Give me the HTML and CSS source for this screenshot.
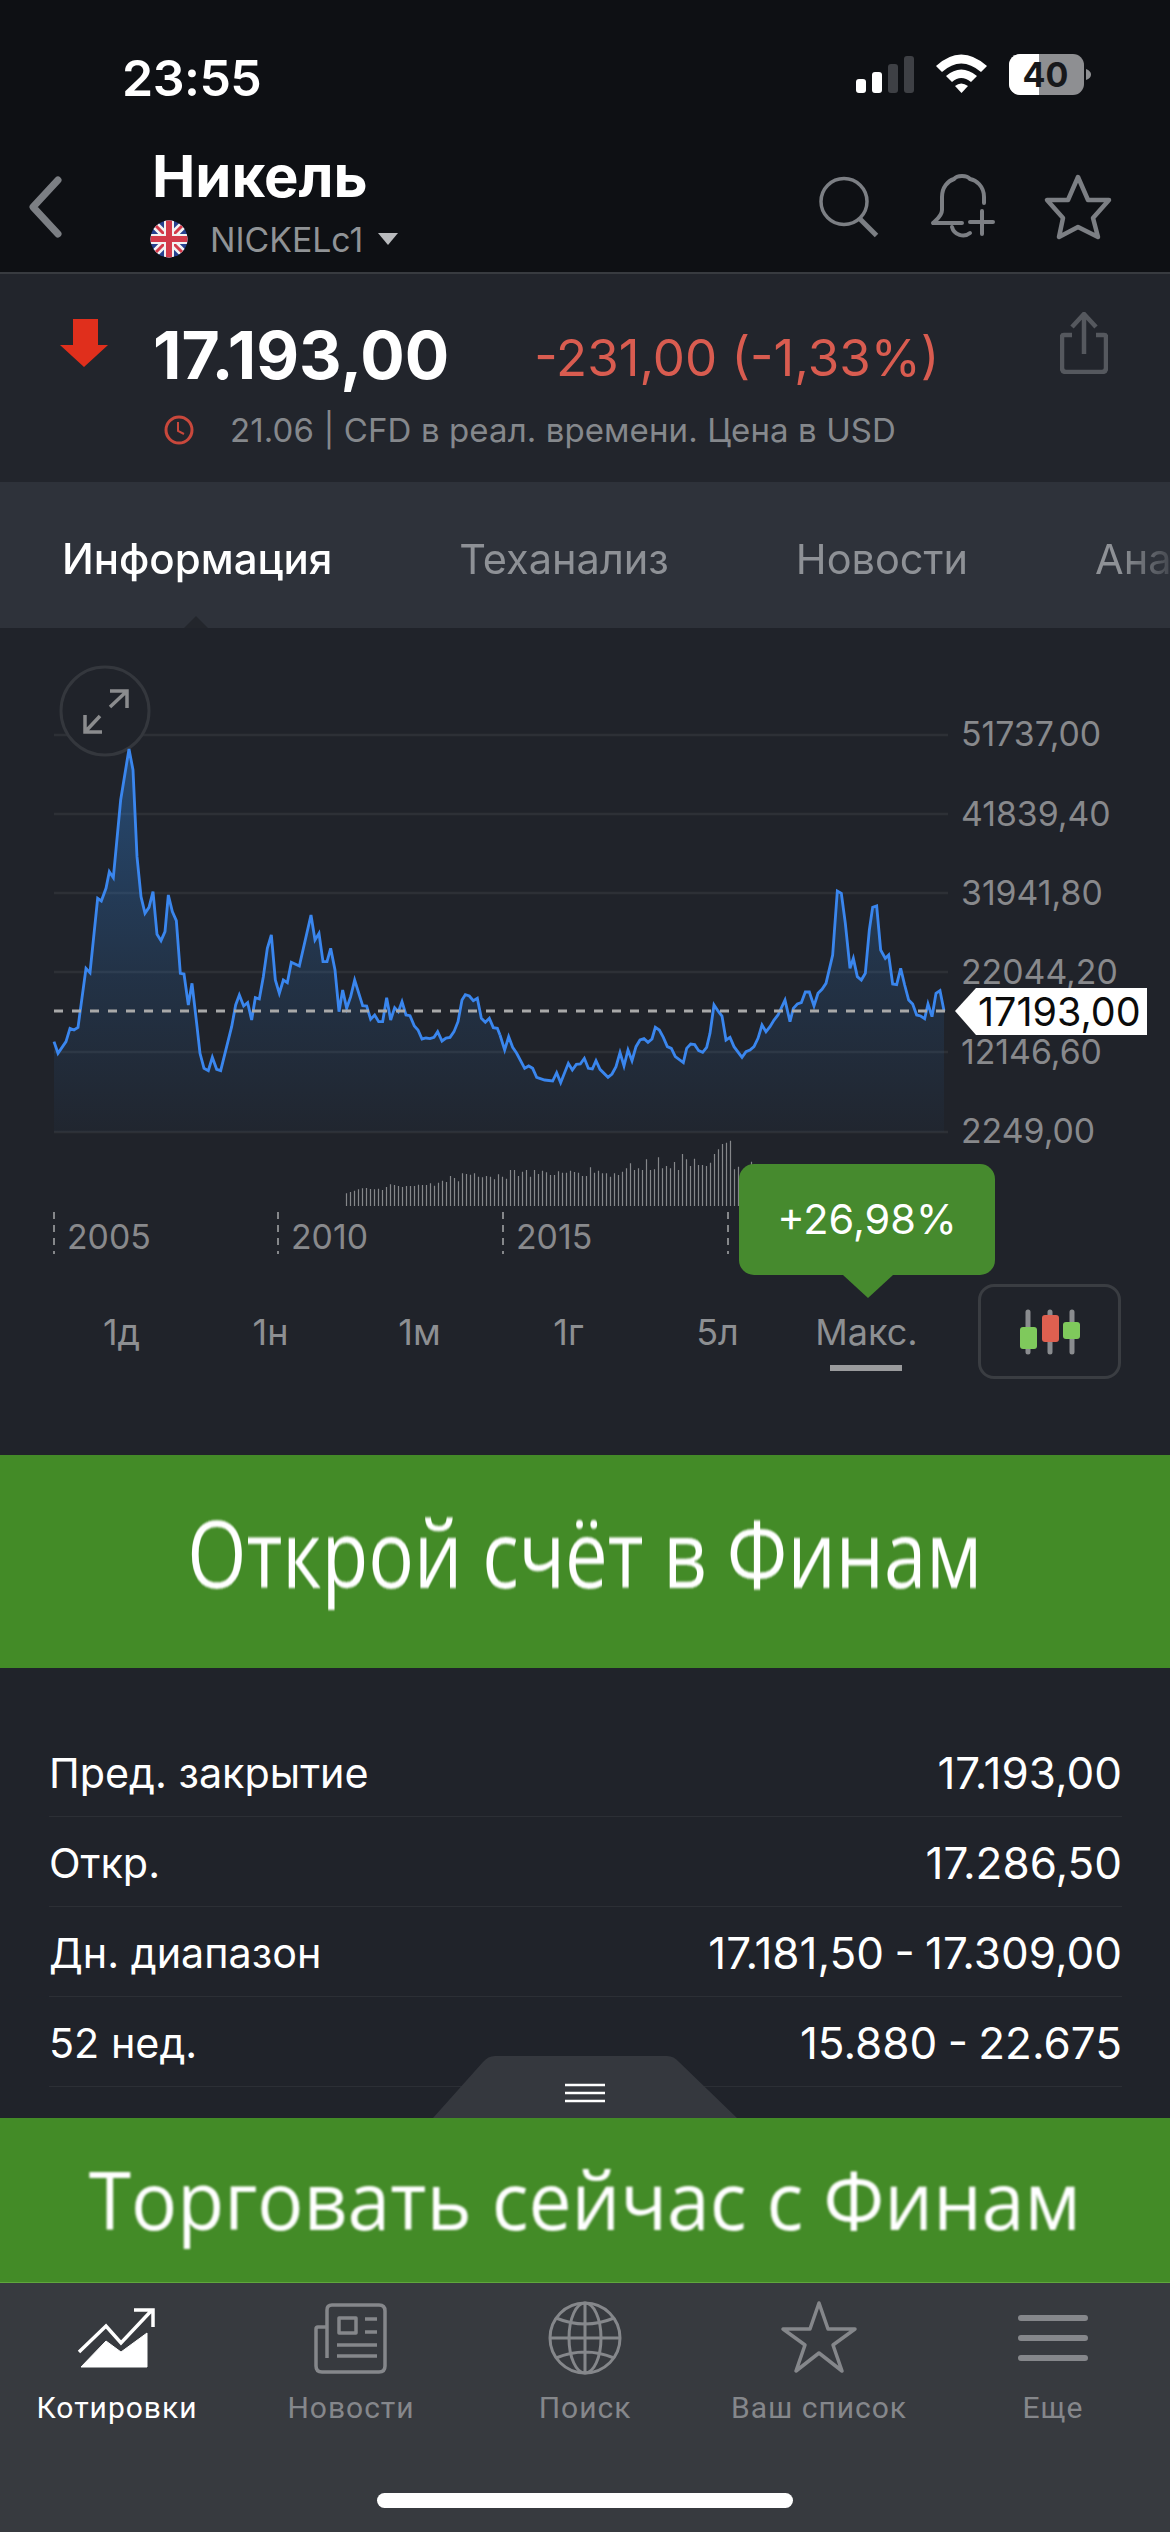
FILE: index.html
```html
<!DOCTYPE html>
<html lang="ru">
<head>
<meta charset="utf-8">
<title>Никель</title>
<link rel="stylesheet" href="styles.css">
</head>
<body>
<div class="page">
  <header class="head">
    <div class="status">
      <span class="time">23:55</span>
      <svg class="status-icons" viewBox="850 52 245 50" width="245" height="50">
        <rect x="856" y="82" width="10" height="14" rx="3" fill="#fff"/>
        <rect x="872" y="75" width="10" height="21" rx="3" fill="#fff"/>
        <rect x="888" y="67" width="10" height="29" rx="3" fill="#3e4045"/>
        <rect x="904" y="59" width="10" height="37" rx="3" fill="#3e4045"/>
        <path d="M936 69Q961 46 987 69L981 75Q961 58 942 75Z" fill="#fff"/>
        <path d="M946 79Q961 66 977 79L971 85Q961 77 952 85Z" fill="#fff"/>
        <path d="M955 89Q961 84 968 89L961.500 96Z" fill="#fff"/>
        <rect x="1009" y="57" width="75" height="41" rx="11" fill="#8e8f92"/>
        <path d="M1020 57H1039V98H1020A11 11 0 0 1 1009 87V68A11 11 0 0 1 1020 57Z" fill="#fff"/>
        <path d="M1086 72Q1091 74 1091 77.500Q1091 81 1086 83Z" fill="#8e8f92"/>
        <text class="batt" x="1045.500" y="90" text-anchor="middle">40</text>
      </svg>
    </div>
    <div class="topbar">
      <svg class="back" viewBox="24 170 40 72" width="40" height="72"><path d="M58 180L33 207L58 234" fill="none" stroke="#7c7f84" stroke-width="7" stroke-linecap="round" stroke-linejoin="round"/></svg>
      <div class="title-block">
        <div class="title">Никель</div>
        <div class="sub">
          <svg class="flag" viewBox="0 0 38 38" width="38" height="38">
            <defs><clipPath id="fc"><circle cx="19" cy="19" r="18.500"/></clipPath></defs>
            <g clip-path="url(#fc)">
              <rect width="38" height="38" fill="#27408f"/>
              <path d="M0 0L38 38M38 0L0 38" stroke="#f2f2f2" stroke-width="8"/>
              <path d="M0 0L38 38M38 0L0 38" stroke="#d33a4a" stroke-width="3"/>
              <path d="M19 0V38M0 19H38" stroke="#f2f2f2" stroke-width="10"/>
              <path d="M19 0V38M0 19H38" stroke="#d33a4a" stroke-width="6"/>
            </g>
          </svg>
          <span class="symbol">NICKELc1</span>
          <svg class="caret" viewBox="0 0 20 12" width="20" height="12"><path d="M0 0H20L10 12Z" fill="#b9bbbe"/></svg>
        </div>
      </div>
      <div class="top-actions">
        <svg viewBox="815 170 70 72" width="70" height="72"><circle cx="844" cy="201.500" r="23" fill="none" stroke="#7c7f84" stroke-width="3.500"/><path d="M860 219L876.500 235.500" stroke="#7c7f84" stroke-width="5" fill="none"/></svg>
        <svg viewBox="925 170 75 72" width="75" height="72"><g fill="none" stroke="#7c7f84" stroke-width="4" stroke-linecap="round" stroke-linejoin="round"><path d="M984 203V197C984 186 976 180 970 179C967 175 957 175 954 179C948 181 942 187 942 197V210C942 216 937 219 933 223H962"/><path d="M952 227C954 235 964 238 970 233"/><path d="M970 222H993M982 211V234"/></g></svg>
        <svg viewBox="1040 170 75 72" width="75" height="72"><path d="M1078 177L1088 200H1109L1093 218L1098 237L1078 227L1059 237L1063 218L1047 200H1068Z" fill="none" stroke="#7c7f84" stroke-width="4.500" stroke-linejoin="round"/></svg>
      </div>
    </div>
  </header>

  <section class="quote">
    <div class="quote-main">
      <svg class="down" viewBox="0 0 48 48" width="48" height="48"><path d="M13 0H38V26H48L24 48L0 26H13Z" fill="#e02f1c"/></svg>
      <span class="price">17.193,00</span>
      <span class="change">-231,00 (-1,33%)</span>
      <svg class="share" viewBox="0 0 48 62" width="48" height="62"><g fill="none" stroke="#55585e" stroke-width="4.500"><path d="M24 42V3M12 15L24 2L36 15"/><path d="M12 23H4Q2 23 2 25V56Q2 60 6 60H42Q46 60 46 56V25Q46 23 44 23H36"/></g></svg>
    </div>
    <div class="quote-meta">
      <svg class="clock" viewBox="0 0 30 30" width="30" height="30"><circle cx="15" cy="15" r="13" fill="none" stroke="#c9483c" stroke-width="3"/><path d="M14 7V16L20 19" fill="none" stroke="#c9483c" stroke-width="2"/></svg>
      <span>21.06 | CFD в реал. времени. Цена в USD</span>
    </div>
  </section>

  <nav class="tabs">
    <div class="tab-row">
      <span class="tab tab-on">Информация</span>
      <span class="tab">Теханализ</span>
      <span class="tab">Новости</span>
      <span class="tab">Аналитика</span>
    </div>
    <span class="tab-pointer"></span>
  </nav>

  <section class="chart">
    <svg class="plot" viewBox="0 628 1170 642" width="1170" height="642">
      <defs>
        <linearGradient id="area" gradientUnits="userSpaceOnUse" x1="0" y1="150" x2="0" y2="1295">
          <stop offset="0" stop-color="#2f80d8" stop-opacity=".42"/>
          <stop offset=".6" stop-color="#2f80d8" stop-opacity=".16"/>
          <stop offset="1" stop-color="#2f80d8" stop-opacity=".03"/>
        </linearGradient>
      </defs>
      <g class="grid">
        <path d="M54 735H948M54 814H948M54 893H948M54 972H948M54 1052H948M54 1132H948"/>
      </g>
      <circle cx="105" cy="711" r="44" class="expand-ring"/>
      <path class="expand-arrows" d="M85 715V732H102M85 732L100 716M110 691H127V708M127 691L110 707"/>

      <g transform="translate(0 700) scale(.33333)">
        <polygon fill="url(#area)" points="162,1295 162,1025 174,1060 198,1025 210,985 222,990 234,982 258,805 270,818 293,595 304,603 318,565 328,515 340,533 362,300 387,155 399,210 411,470 423,590 435,640 447,622 459,575 471,703 483,722 495,695 505,585 517,635 529,662 541,820 552,822 565,915 576,850 590,970 600,1060 612,1105 625,1112 637,1072 650,1108 662,1112 680,1040 695,980 707,915 718,885 731,918 743,908 755,960 766,893 778,897 790,830 802,745 814,705 826,840 838,880 850,840 862,848 874,787 898,798 933,645 945,720 957,700 969,785 981,785 992,745 1005,810 1017,935 1028,870 1040,925 1052,890 1064,840 1088,917 1100,918 1112,958 1124,945 1136,965 1148,965 1160,893 1172,960 1184,923 1195,935 1206,905 1218,945 1230,947 1243,978 1254,990 1266,1017 1278,1014 1290,1016 1302,1012 1313,995 1326,1023 1338,1014 1350,1012 1362,995 1374,965 1386,900 1396,884 1408,888 1420,902 1432,895 1444,955 1456,967 1468,955 1480,983 1492,985 1500,1005 1500,1295"/>
        <polyline class="curve" points="162,1025 174,1060 198,1025 210,985 222,990 234,982 258,805 270,818 293,595 304,603 318,565 328,515 340,533 362,300 387,147 399,210 411,470 423,590 435,640 447,622 459,575 471,703 483,722 495,695 505,585 517,635 529,662 541,820 552,822 565,915 576,850 590,970 600,1060 612,1105 625,1112 637,1072 650,1108 662,1112 680,1040 695,980 707,915 718,885 731,918 743,908 755,960 766,893 778,897 790,830 802,745 814,705 826,840 838,880 850,840 862,848 874,787 898,798 933,645 945,720 957,700 969,785 981,785 992,745 1005,810 1017,935 1028,870 1040,925 1052,890 1064,840 1088,917 1100,918 1112,958 1124,945 1136,965 1148,965 1160,893 1172,960 1184,923 1195,935 1206,905 1218,945 1230,947 1243,978 1254,990 1266,1017 1278,1014 1290,1016 1302,1012 1313,995 1326,1023 1338,1014 1350,1012 1362,995 1374,965 1386,900 1396,884 1408,888 1420,902 1432,895 1444,955 1456,967 1468,955 1480,983 1492,985 1500,1005"/>
      </g>
      <g transform="translate(500 700) scale(.33333)">
        <polygon fill="url(#area)" points="0,1295 0,1005 14,1050 26,1010 38,1042 50,1060 74,1105 86,1098 98,1105 110,1132 134,1140 158,1143 170,1118 182,1148 205,1090 217,1110 229,1093 241,1092 253,1075 265,1105 277,1107 288,1082 300,1108 324,1132 336,1122 348,1100 360,1058 372,1098 384,1050 396,1082 408,1040 420,1020 432,1016 444,1027 456,1017 466,982 478,990 490,1012 502,1040 514,1045 526,1070 550,1088 560,1045 572,1032 584,1034 596,1052 608,1057 620,1042 630,1000 642,915 654,933 666,948 678,1020 690,1012 702,1040 726,1072 738,1055 750,1050 762,1040 774,1015 786,975 798,995 810,980 822,960 834,945 855,900 870,965 880,925 892,912 904,908 916,876 928,876 942,918 954,880 966,868 978,850 998,765 1012,573 1024,580 1036,670 1050,805 1060,775 1072,830 1084,840 1096,820 1108,690 1118,622 1130,618 1142,750 1156,775 1166,765 1178,852 1190,854 1202,805 1214,855 1226,900 1238,912 1250,945 1262,948 1274,956 1284,912 1296,950 1308,880 1320,872 1332,932 1332,1295"/>
        <polyline class="curve" points="0,1005 14,1050 26,1010 38,1042 50,1060 74,1105 86,1098 98,1105 110,1132 134,1140 158,1143 170,1118 182,1148 205,1090 217,1110 229,1093 241,1092 253,1075 265,1105 277,1107 288,1082 300,1108 324,1132 336,1122 348,1100 360,1058 372,1098 384,1050 396,1082 408,1040 420,1020 432,1016 444,1027 456,1017 466,982 478,990 490,1012 502,1040 514,1045 526,1070 550,1088 560,1045 572,1032 584,1034 596,1052 608,1057 620,1042 630,1000 642,915 654,933 666,948 678,1020 690,1012 702,1040 726,1072 738,1055 750,1050 762,1040 774,1015 786,975 798,995 810,980 822,960 834,945 855,900 870,965 880,925 892,912 904,908 916,876 928,876 942,918 954,880 966,868 978,850 998,765 1012,573 1024,580 1036,670 1050,805 1060,775 1072,830 1084,840 1096,820 1108,690 1118,622 1130,618 1142,750 1156,775 1166,765 1178,852 1190,854 1202,805 1214,855 1226,900 1238,912 1250,945 1262,948 1274,956 1284,912 1296,950 1308,880 1320,872 1332,932"/>
      </g>
      <path class="last-line" d="M54 1011H948"/>

      <g class="axis">
        <text x="961" y="746">51737,00</text>
        <text x="961" y="826">41839,40</text>
        <text x="961" y="905">31941,80</text>
        <text x="961" y="984">22044,20</text>
        <text x="961" y="1064">12146,60</text>
        <text x="961" y="1143">2249,00</text>
      </g>
      <polygon points="955,1011 976,988 1147,988 1147,1035 976,1035" fill="#fff"/>
      <text class="last-tag" x="978" y="1026">17193,00</text>

      <g transform="translate(330.500 1120) scale(.33333)">
        <path class="vol" d="M48 258V220M60 258V216M72 258V212M84 258V208M96 258V205M108 258V204M120 258V207M132 258V208M144 258V206M156 258V210M168 258V201M180 258V193M192 258V195M204 258V198M216 258V201M228 258V198M240 258V198M252 258V198M264 258V194M276 258V195M288 258V195M300 258V190M312 258V197M324 258V188M336 258V182M348 258V186M360 258V168M372 258V174M384 258V184M396 258V160M408 258V162M420 258V164M432 258V160M444 258V170M456 258V172M468 258V168M480 258V170M492 258V178M504 258V163M516 258V170M528 258V176M540 258V150M552 258V150M564 258V168M576 258V155M588 258V150M600 258V170M612 258V150M624 258V162M636 258V152M648 258V157M660 258V165M672 258V165M684 258V154M696 258V158M708 258V158M720 258V152M732 258V156M744 258V158M756 258V168M768 258V168M780 258V142M792 258V158M804 258V152M816 258V160M828 258V160M840 258V170M852 258V160M864 258V165M876 258V155M888 258V145M900 258V130M912 258V150M924 258V145M936 258V150M948 258V118M960 258V150M972 258V148M984 258V112M996 258V145M1008 258V138M1020 258V145M1032 258V126M1044 258V150M1056 258V102M1068 258V118M1080 258V138M1092 258V116M1104 258V135M1116 258V135M1128 258V138M1140 258V128M1152 258V102M1164 258V88M1176 258V72M1188 258V68M1200 258V62M1212 258V148M1224 258V140M1263 258V125"/>
      </g>

      <path class="tick" d="M54 1212V1254M278 1212V1254M503 1212V1254M728 1212V1254"/>
      <g class="axis years">
        <text x="67" y="1249">2005</text>
        <text x="291" y="1249">2010</text>
        <text x="516" y="1249">2015</text>
      </g>
    </svg>

    <div class="tooltip">+26,98%</div>

    <div class="periods">
      <span class="period">1д</span>
      <span class="period">1н</span>
      <span class="period">1м</span>
      <span class="period">1г</span>
      <span class="period">5л</span>
      <span class="period period-on">Макс.</span>
      <div class="chart-type">
        <svg viewBox="1015 1305 70 54" width="70" height="54">
          <path d="M1028 1312V1352M1050 1312V1352M1072 1312V1352" stroke="#8a8c8f" stroke-width="5" stroke-linecap="round"/>
          <rect x="1020" y="1327" width="17" height="22" rx="3" fill="#7fc95c"/>
          <rect x="1042" y="1315" width="17" height="27" rx="3" fill="#de6050"/>
          <rect x="1063" y="1322" width="17" height="17" rx="3" fill="#7fc95c"/>
        </svg>
      </div>
    </div>
  </section>

  <a class="banner banner-open"><span>Открой счёт в Финам</span></a>

  <section class="facts">
    <div class="fact"><span>Пред. закрытие</span><b>17.193,00</b></div>
    <div class="fact"><span>Откр.</span><b>17.286,50</b></div>
    <div class="fact"><span>Дн. диапазон</span><b>17.181,50 - 17.309,00</b></div>
    <div class="fact"><span>52 нед.</span><b>15.880 - 22.675</b></div>
    <div class="handle">
      <svg viewBox="0 0 304 62" width="304" height="62"><path d="M0 62L50 6Q55 0 62 0H234Q241 0 246 6L304 62Z" fill="#35383e"/><path d="M132 29H172M132 37H172M132 45H172" stroke="#fff" stroke-width="2.500"/></svg>
    </div>
  </section>

  <a class="banner banner-trade"><span>Торговать сейчас с Финам</span></a>

  <footer class="nav">
    <div class="nav-items">
      <div class="nav-item nav-on">
        <svg viewBox="71 2300 92 76" width="92" height="76">
          <path d="M81 2367L106 2341L121 2352L147 2333V2367Z" fill="#fff" stroke="#fff" stroke-width="1" stroke-linejoin="round"/>
          <path d="M79 2352L106 2326L121 2343L152 2310M134 2310H153V2327" fill="none" stroke="#fff" stroke-width="3.500"/>
        </svg>
        <span>Котировки</span>
      </div>
      <div class="nav-item">
        <svg viewBox="305 2300 92 76" width="92" height="76"><g fill="none" stroke="#85878b" stroke-width="3.500" stroke-linejoin="round">
          <path d="M327 2358V2310Q327 2305 332 2305H379Q385 2305 385 2311V2366Q385 2372 379 2372H322Q316 2372 316 2366V2329Q316 2327 318 2327H327"/>
          <rect x="339" y="2318" width="17" height="15"/>
          <path d="M365 2319H377M365 2332H377M337 2345H377M337 2356H377"/>
        </g></svg>
        <span>Новости</span>
      </div>
      <div class="nav-item">
        <svg viewBox="539 2300 92 76" width="92" height="76"><g fill="none" stroke="#85878b" stroke-width="3">
          <ellipse cx="585" cy="2338" rx="35" ry="35"/>
          <ellipse cx="585" cy="2338" rx="16" ry="35"/>
          <path d="M585 2303V2373M550 2338H620M556 2318Q585 2330 614 2318M556 2358Q585 2346 614 2358"/>
        </g></svg>
        <span>Поиск</span>
      </div>
      <div class="nav-item">
        <svg viewBox="773 2300 92 76" width="92" height="76"><path d="M819 2303L828 2329H855L833 2345L842 2371L819 2353L796 2371L805 2345L783 2329H810Z" fill="none" stroke="#85878b" stroke-width="3.500" stroke-linejoin="round"/></svg>
        <span>Ваш список</span>
      </div>
      <div class="nav-item">
        <svg viewBox="1007 2300 92 76" width="92" height="76"><path d="M1021 2318H1085M1021 2338H1085M1021 2358H1085" stroke="#85878b" stroke-width="6" stroke-linecap="round"/></svg>
        <span>Еще</span>
      </div>
    </div>
    <div class="home-bar"></div>
  </footer>
</div>
</body>
</html>
```

FILE: styles.css
```css
* { box-sizing: border-box; }
html, body { margin: 0; padding: 0; background: #0e1014; }
body { font-family: Inter, "Liberation Sans", sans-serif; color: #fff; }

.page {
  width: 1170px;
  height: 2532px;
  display: flex;
  flex-direction: column;
  overflow: hidden;
  position: relative;
}

/* header */
.head { height: 274px; background: #0e1014; border-bottom: 2px solid #383b40; flex: none; }
.status { height: 138px; padding: 49px 75px 0 122px; display: flex; justify-content: space-between; align-items: flex-start; }
.time { font-size: 50px; line-height: 58px; font-weight: 600; letter-spacing: -.5px; }
.batt { font: 700 34px Inter, sans-serif; fill: #17181b; }
.topbar { display: flex; padding: 0 55px 0 24px; align-items: flex-start; }
.back { margin-top: 32px; flex: none; }
.title-block { margin-left: 88px; padding-top: 6px; }
.title { font-size: 58px; line-height: 64px; font-weight: 700; }
.sub { display: flex; align-items: center; margin-top: 11px; height: 40px; margin-left: -2px; }
.symbol { font-size: 33.800px; color: #909396; margin-left: 22px; }
.caret { margin-left: 15px; }
.top-actions { margin-left: auto; margin-top: 32px; display: flex; gap: 40px; }

/* quote */
.quote { height: 208px; background: #22252c; flex: none; padding: 50px 62px 0 60px; }
.quote-main { display: flex; align-items: center; height: 62px; }
.down { flex: none; margin-top: -24px; }
.price { margin-left: 45px; font-size: 66px; font-weight: 700; line-height: 62px; }
.change { margin-left: 85px; font-size: 51px; color: #d95c50; margin-top: 4px; }
.share { margin-left: auto; flex: none; margin-top: -24px; }
.quote-meta { display: flex; align-items: center; margin-top: 24px; margin-left: 104px; color: #85888c; font-size: 33px; letter-spacing: .1px; }
.quote-meta span { margin-left: 36px; }

/* tabs */
.tabs { height: 146px; background: #2e323a; flex: none; position: relative; overflow: hidden; }
.tab-row {
  display: flex; gap: 127px; padding: 51px 0 0 62px; white-space: nowrap;
  -webkit-mask-image: linear-gradient(to right, #000 1120px, rgba(0,0,0,.25) 1170px);
          mask-image: linear-gradient(to right, #000 1120px, rgba(0,0,0,.25) 1170px);
}
.tab { font-size: 41.500px; line-height: 52px; color: #8e9196; }
.tab-on { color: #fff; font-weight: 500; font-size: 42px; }
.tab-pointer {
  position: absolute; left: 184px; bottom: 0; width: 0; height: 0;
  border-left: 12px solid transparent; border-right: 12px solid transparent;
  border-bottom: 12px solid #23262c;
}

/* chart */
.chart { height: 827px; background: #20232a; flex: none; position: relative; }
.plot { display: block; }
.grid path { stroke: #2d3036; stroke-width: 2.500; fill: none; }
.expand-ring { fill: #20232a; stroke: #34373d; stroke-width: 3; }
.expand-arrows { fill: none; stroke: #8b8c8e; stroke-width: 3.500; }
.curve { fill: none; stroke: #3a86ee; stroke-width: 8.500; stroke-linejoin: miter; }
.last-line { stroke: #a9a9a9; stroke-width: 3; stroke-dasharray: 9 9; fill: none; }
.axis text { font: 400 33.800px Inter, sans-serif; fill: #88898c; }
.last-tag { font: 400 39.500px Inter, sans-serif; fill: #0b0b0b; }
.vol { stroke: #85878a; stroke-width: 3.600; fill: none; }
.tick { stroke: #85878a; stroke-width: 2; stroke-dasharray: 7 6; fill: none; }
.tooltip {
  position: absolute; left: 739px; top: 536px; width: 256px; height: 111px;
  background: #468a2e; border-radius: 15px; font-size: 41.500px;
  display: flex; align-items: center; justify-content: center; padding-bottom: 2px;
}
.tooltip::after {
  content: ""; position: absolute; left: 104px; top: 111px; width: 0; height: 0;
  border-left: 25px solid transparent; border-right: 25px solid transparent;
  border-top: 23px solid #468a2e;
}
.periods { display: flex; padding: 14px 49px 0 47px; align-items: flex-start; }
.period { width: 149px; height: 95px; display: flex; align-items: center; justify-content: center; font-size: 36px; color: #8d8f92; position: relative; }
.period-on::after { content: ""; position: absolute; left: 38px; top: 81px; width: 72px; height: 6px; background: #9a9b9d; }
.chart-type { margin-left: auto; width: 143px; height: 95px; border: 3px solid #3a3d42; border-radius: 16px; display: flex; align-items: center; justify-content: center; flex: none; }

/* banners */
.banner { display: flex; align-items: center; justify-content: center; background: #438b27; flex: none; }
.banner span { font-family: "Open Sans", sans-serif; color: #fff; filter: blur(.9px); white-space: nowrap; }
.banner-open { height: 213px; }
.banner-open span { font-size: 94px; padding-bottom: 20px; transform: scaleX(.81); }
.banner-trade { height: 165px; border-bottom: 1px solid #5fa63d; }
.banner-trade span { font-size: 80px; padding-bottom: 4px; transform: scaleX(.96); }

/* facts */
.facts { flex: 1; background: #20232a; padding: 59px 48px 0 49px; position: relative; overflow: hidden; }
.fact { height: 90px; padding-top: 2px; display: flex; justify-content: space-between; align-items: center; border-bottom: 1px solid #2c2f35; font-size: 41.300px; }
.fact b { font-weight: 400; font-size: 44px; word-spacing: -2px; }
.handle { position: absolute; left: 433px; bottom: 0; height: 62px; line-height: 0; }

/* nav */
.nav { height: 249px; background: #373a3f; flex: none; padding-top: 17px; display: flex; flex-direction: column; }
.nav-items { display: grid; grid-template-columns: repeat(5, 234px); }
.nav-item { display: flex; flex-direction: column; align-items: center; color: #85878b; font: 400 30px/36px Roboto, sans-serif; letter-spacing: 1px; }
.nav-on { color: #fff; }
.nav-item span { margin-top: 14px; }
.home-bar { width: 416px; height: 15px; border-radius: 8px; background: #fff; margin: auto auto 24px; }
```
